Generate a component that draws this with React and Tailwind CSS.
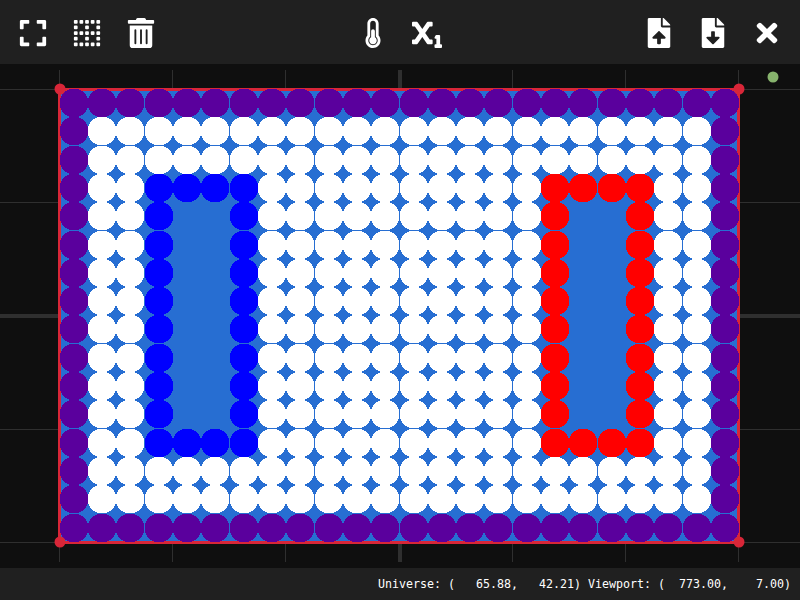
import React from "react";
import {
  FaExpand,
  FaBorderNone,
  FaTrashAlt,
  FaThermometerHalf,
  FaSubscript,
  FaFileUpload,
  FaFileDownload,
  FaTimes,
} from "react-icons/fa";

const COLS = 24;
const ROWS = 16;
const PITCH = 28.31;
const WHITE = "#ffffff";
const BORDER = "#5a009d";
const COLD = "#0000ff";
const HOT = "#ff0000";

// Colour of one lattice particle, or null inside a hollow box.
function particle(col, row) {
  if (col === 0 || row === 0 || col === COLS - 1 || row === ROWS - 1) return BORDER;
  const inBox = (left) => col >= left && col <= left + 3 && row >= 3 && row <= 12;
  const onEdge = (left) => col === left || col === left + 3 || row === 3 || row === 12;
  if (inBox(3)) return onEdge(3) ? COLD : null;
  if (inBox(17)) return onEdge(17) ? HOT : null;
  return WHITE;
}

// Aliased disc built from whole-pixel rows around an integer centre.
function discPath(cx, cy, half, radius) {
  let d = "";
  for (let y = -half; y < half; y++) {
    const dy = y + 0.5;
    const reach = Math.sqrt(radius * radius - dy * dy);
    const w = Math.min(half, Math.floor(reach + 0.5));
    d += `M${cx - w} ${cy + y}h${2 * w}v1h${-2 * w}z`;
  }
  return d;
}

function Particles() {
  const items = [];
  for (let row = 0; row < ROWS; row++) {
    for (let col = 0; col < COLS; col++) {
      const fill = particle(col, row);
      if (!fill) continue;
      const cx = 60 + Math.floor(col * PITCH + 0.3) + 14;
      const cy = 89 + Math.floor(row * PITCH + 0.48) + 14;
      items.push(<path key={`${col}-${row}`} d={discPath(cx, cy, 14, 14.45)} fill={fill} />);
    }
  }
  return <g>{items}</g>;
}

function Simulation() {
  return (
    <svg className="block h-[504px] w-[800px]" viewBox="0 64 800 504" shapeRendering="crispEdges">
      <g fill="#2f2f2f">
        {[59, 172, 285, 512, 625, 738].map((x) => (
          <rect key={x} x={x} y={70} width={1} height={492} />
        ))}
        {[89, 202, 429, 542].map((y) => (
          <rect key={y} x={0} y={y} width={800} height={1} />
        ))}
        <rect x={398} y={70} width={4} height={492} />
        <rect x={0} y={314} width={800} height={4} />
      </g>
      <rect x={58} y={88} width={682} height={456} fill="#d82638" />
      <rect x={61} y={91} width={676} height={450} fill="#276ed2" />
      <Particles />
      {[[60, 89], [739, 89], [60, 542], [739, 542]].map(([x, y]) => (
        <circle key={`${x}-${y}`} cx={x} cy={y} r={5.5} fill="#d82638" shapeRendering="auto" />
      ))}
      <circle cx={773} cy={77} r={5.5} fill="#87b36d" shapeRendering="auto" />
    </svg>
  );
}

function Tool({ icon: Icon, label }) {
  return (
    <button aria-label={label} className="flex h-[54px] w-[54px] items-center justify-center text-white">
      <Icon className="h-[30px] w-auto" />
    </button>
  );
}

export default function App() {
  return (
    <div className="flex h-[600px] w-[800px] flex-col overflow-hidden bg-[#0f0f0f]">
      <header className="grid h-16 shrink-0 grid-cols-3 bg-[#202020] px-1.5 pt-1.5">
        <div className="flex">
          <Tool icon={FaExpand} label="Fit" />
          <Tool icon={FaBorderNone} label="Grid" />
          <Tool icon={FaTrashAlt} label="Clear" />
        </div>
        <div className="flex justify-center">
          <Tool icon={FaThermometerHalf} label="Temperature" />
          <Tool icon={FaSubscript} label="Variable" />
        </div>
        <div className="flex justify-end">
          <Tool icon={FaFileUpload} label="Upload" />
          <Tool icon={FaFileDownload} label="Download" />
          <Tool icon={FaTimes} label="Close" />
        </div>
      </header>
      <Simulation />
      <footer className="flex h-8 shrink-0 items-center justify-end whitespace-pre bg-[#202020] pt-0.5 pr-[9px] font-['DejaVu_Sans_Mono',monospace] text-[11.63px] text-white">
        {"Universe: (   65.88,   42.21) Viewport: (  773.00,    7.00)"}
      </footer>
    </div>
  );
}
